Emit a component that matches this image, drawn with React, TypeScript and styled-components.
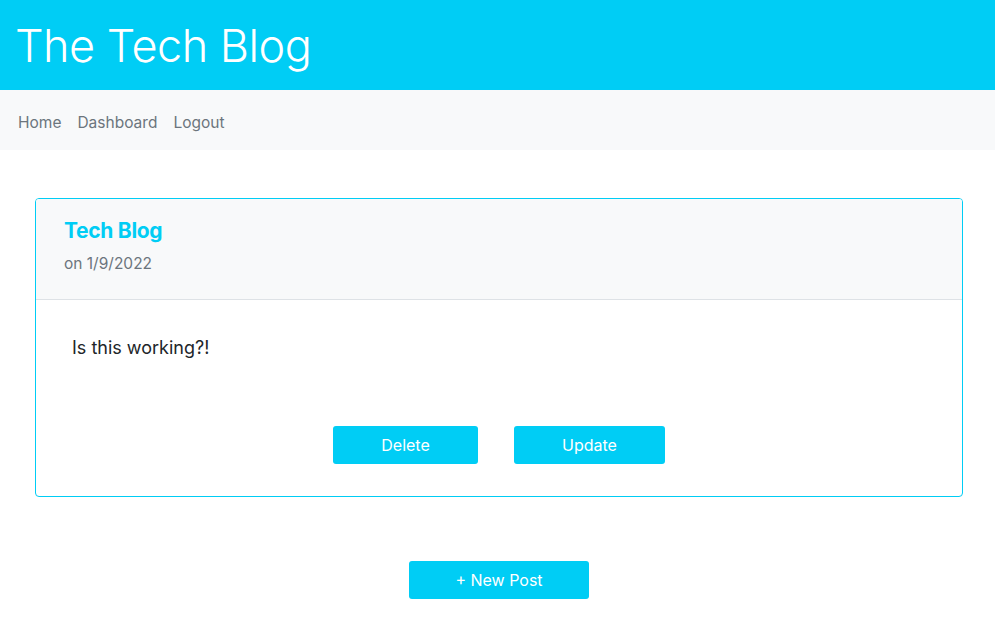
import { FC } from "react";
import styled, { createGlobalStyle } from "styled-components";

const cyan = "#00cdf5";

const GlobalStyle = createGlobalStyle`
    body {
        margin: 0;
        font-family: Inter, "Noto Sans", sans-serif;
        background-color: #ffffff;
        color: #212529;
    }
`;

const Header = styled.header`
    height: 90px;
    background-color: ${cyan};
    display: flex;
    align-items: center;
    padding: 0 15px;
`;

const Title = styled.h1`
    margin: 0;
    font-size: 45px;
    font-weight: 300;
    color: #ffffff;
    letter-spacing: -0.5px;
`;

const Nav = styled.nav`
    height: 60px;
    background-color: #f8f9fa;
    display: flex;
    align-items: center;
    padding: 4px 18px 0;
    box-sizing: border-box;
    gap: 16px;
`;

const NavLink = styled.a`
    font-size: 15.5px;
    color: #6c757d;
    text-decoration: none;
    cursor: pointer;
`;

const Main = styled.main`
    padding: 48px 32px 0 35px;
    display: flex;
    flex-direction: column;
    align-items: center;
`;

const Card = styled.section`
    width: 100%;
    box-sizing: border-box;
    border: 1px solid ${cyan};
    border-radius: 4px;
    overflow: hidden;
`;

const CardHeader = styled.div`
    background-color: #f8f9fa;
    border-bottom: 1px solid #dee2e6;
    padding: 19px 28px 24px;
    height: 101px;
    box-sizing: border-box;
`;

const PostTitle = styled.h2`
    margin: 0;
    font-size: 21px;
    font-weight: 700;
    color: ${cyan};
    letter-spacing: -0.3px;
`;

const PostDate = styled.div`
    margin-top: 11px;
    font-size: 15.5px;
    color: #6c757d;
`;

const CardBody = styled.div`
    padding: 37px 36px 32px;
`;

const PostText = styled.p`
    margin: 0;
    font-size: 18px;
    color: #212529;
`;

const Actions = styled.div`
    display: flex;
    justify-content: center;
    gap: 36px;
    margin-top: 68px;
`;

const Button = styled.button<{ $wide?: number }>`
    height: 38px;
    min-width: ${props => props.$wide ?? 0}px;
    padding: 0 44px;
    border: 0;
    border-radius: 3px;
    background-color: ${cyan};
    color: #ffffff;
    font-family: Inter, "Noto Sans", sans-serif;
    font-size: 16px;
    cursor: pointer;
`;

const Footer = styled.div`
    margin-top: 64px;
    display: flex;
    justify-content: center;
`;

const App: FC = () => {
    return (
        <>
            <GlobalStyle />
            <Header>
                <Title>The Tech Blog</Title>
            </Header>
            <Nav>
                <NavLink>Home</NavLink>
                <NavLink>Dashboard</NavLink>
                <NavLink>Logout</NavLink>
            </Nav>
            <Main>
                <Card>
                    <CardHeader>
                        <PostTitle>Tech Blog</PostTitle>
                        <PostDate>on 1/9/2022</PostDate>
                    </CardHeader>
                    <CardBody>
                        <PostText>Is this working?!</PostText>
                        <Actions>
                            <Button $wide={145}>Delete</Button>
                            <Button $wide={151}>Update</Button>
                        </Actions>
                    </CardBody>
                </Card>
                <Footer>
                    <Button $wide={180}>+ New Post</Button>
                </Footer>
            </Main>
        </>
    );
};

export default App;
